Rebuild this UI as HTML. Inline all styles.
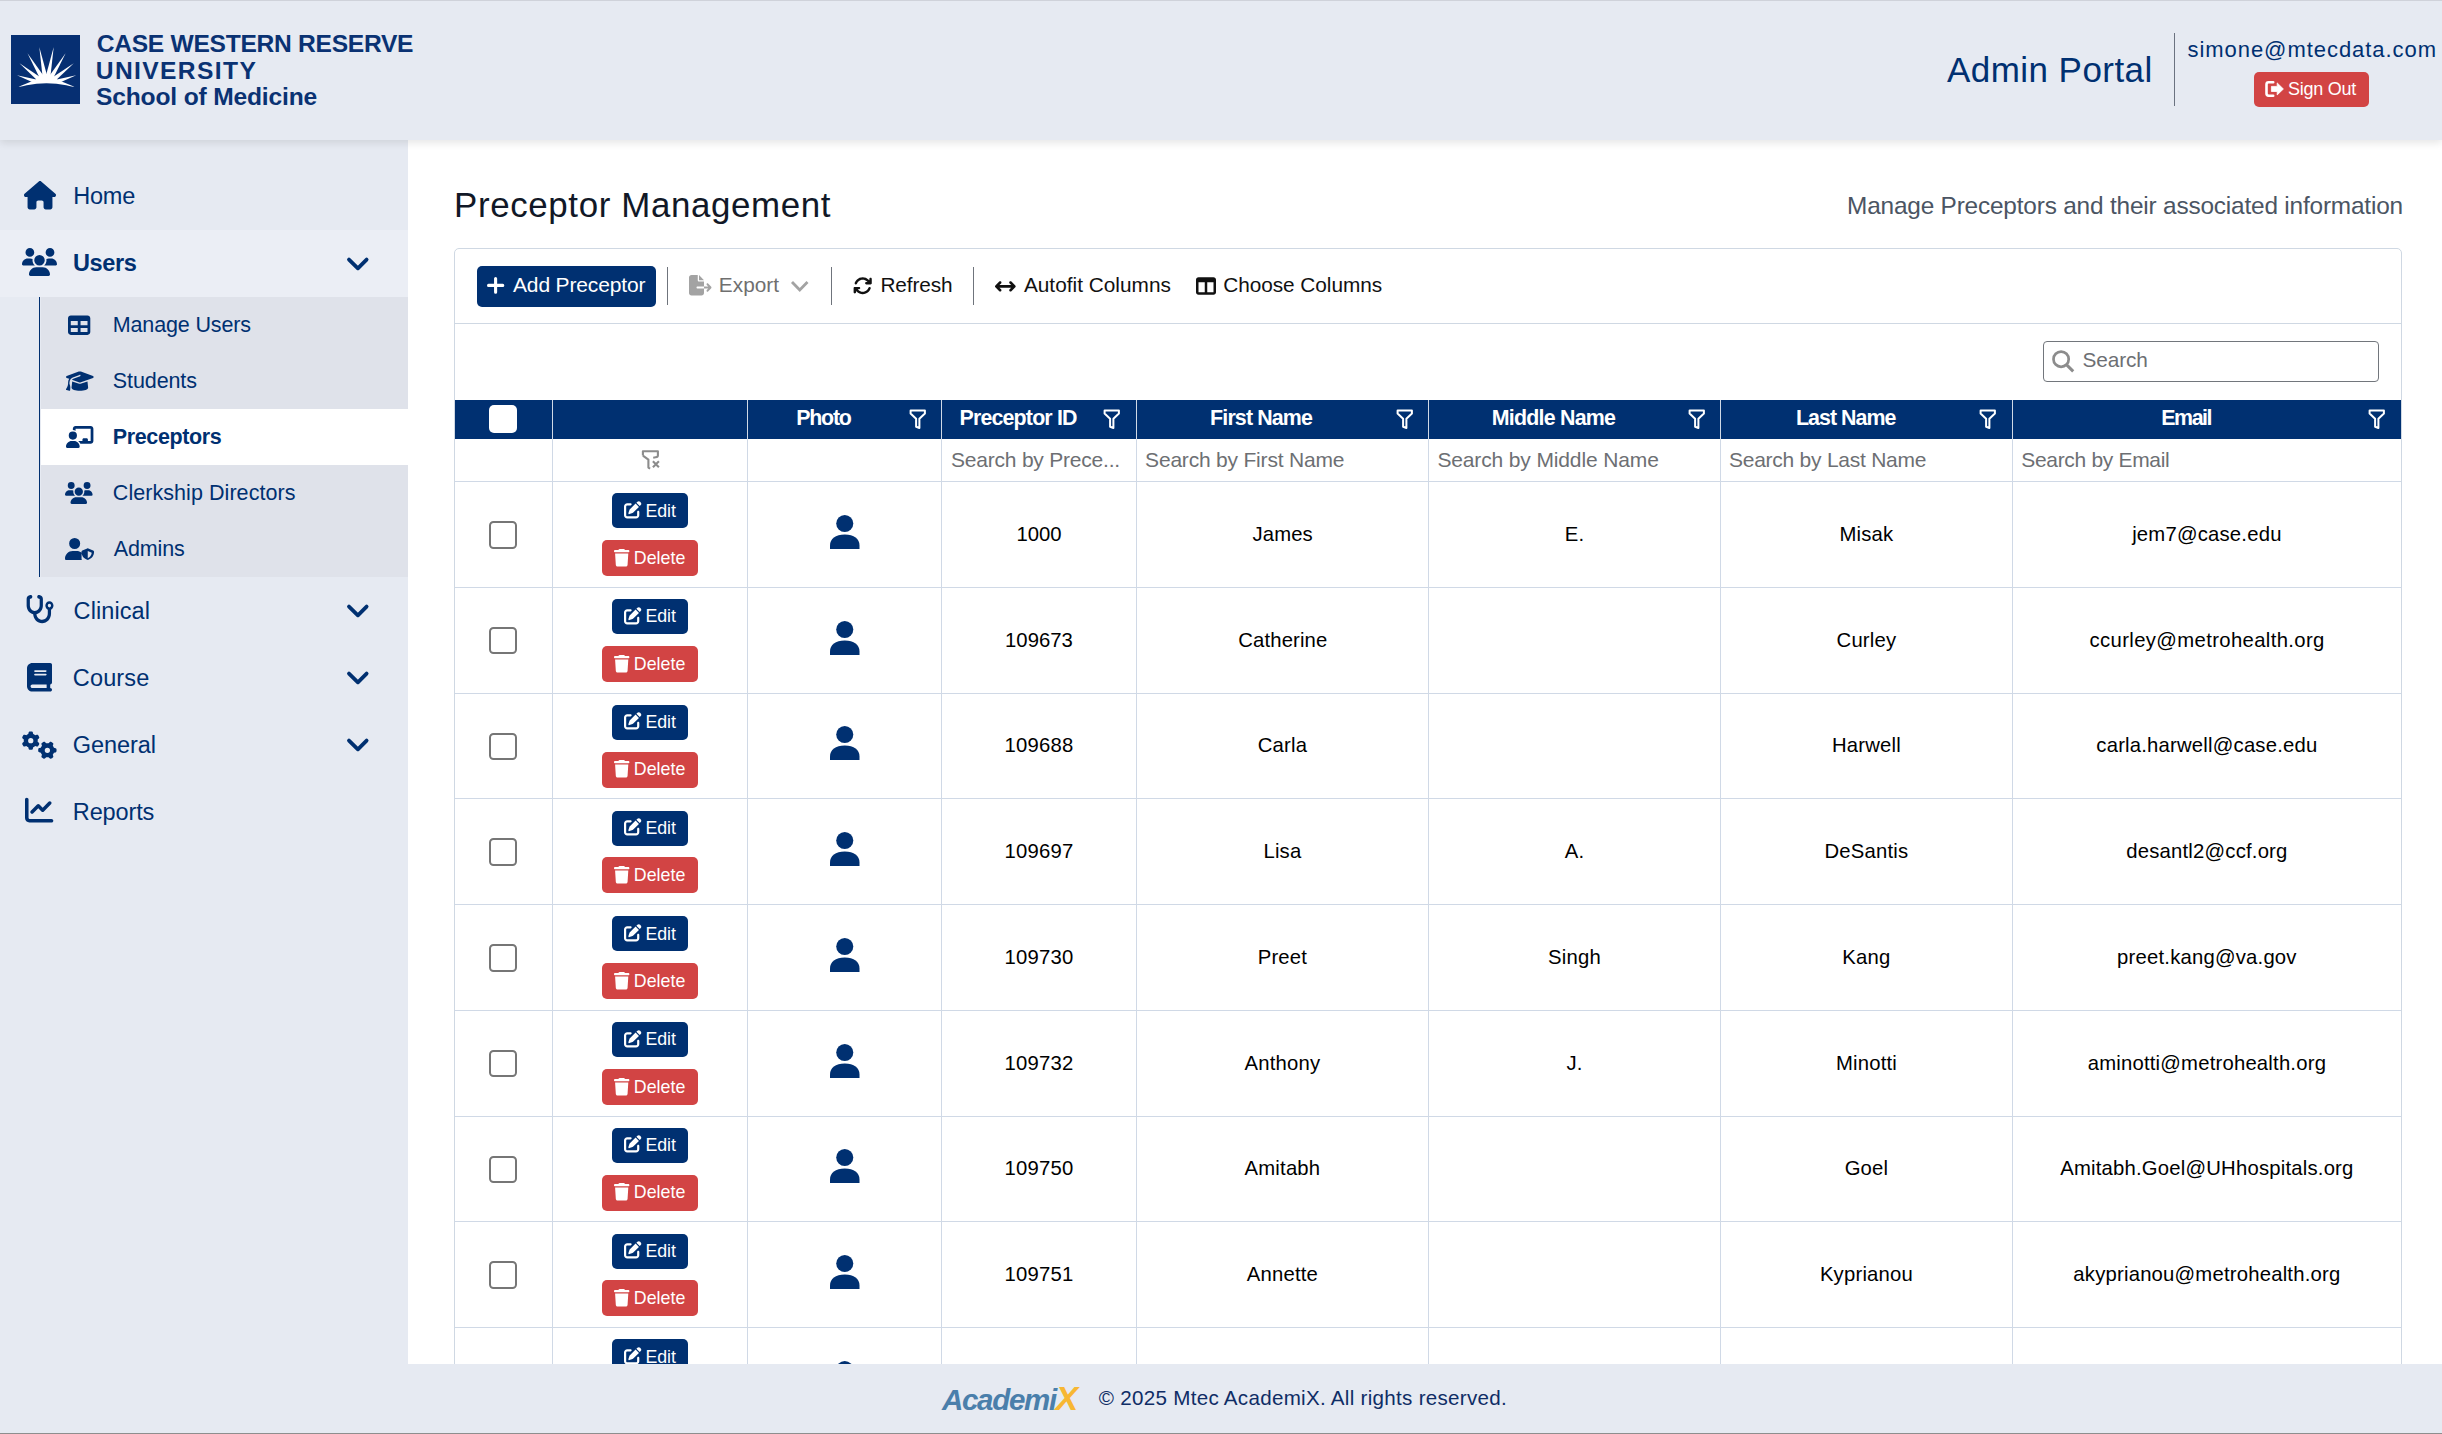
<!DOCTYPE html>
<html><head><meta charset="utf-8"><title>Preceptor Management</title>
<style>
html,body{margin:0;padding:0;}
body{width:2442px;height:1434px;position:relative;overflow:hidden;background:#fff;font-family:"Liberation Sans",sans-serif;}
.t{position:absolute;white-space:nowrap;}
.r{position:absolute;}
.i{position:absolute;overflow:visible;}
</style></head><body>
<div class="r" style="left:0px;top:0px;width:2442px;height:140px;background:#e6eaf2;box-shadow:0 3px 8px rgba(0,0,0,0.10);z-index:5;border-top:1px solid #cfd2da;box-sizing:border-box;"></div>
<div style="position:absolute;left:0;top:0;width:2442px;height:140px;z-index:6;">
<svg class="i" style="left:11.00px;top:35.00px;overflow:hidden;" width="69.00" height="69.00" viewBox="0 0 69 69" preserveAspectRatio="none"><rect width="69" height="69" fill="#062f72"/><polygon points="6,40.2 27.48,44.91 26.03,49.28" fill="#fff"/><polygon points="8.5,28.3 29.75,42.43 26.88,46.02" fill="#fff"/><polygon points="16.5,18.3 32.73,40.91 28.79,43.28" fill="#fff"/><polygon points="28.3,12.1 36.04,40.52 31.52,41.37" fill="#fff"/><polygon points="42.7,12.1 39.48,41.37 34.96,40.52" fill="#fff"/><polygon points="54.6,18.3 42.23,43.29 38.29,40.92" fill="#fff"/><polygon points="62.8,28.3 44.15,46.06 41.29,42.47" fill="#fff"/><polygon points="65.2,40.2 44.97,49.29 43.53,44.93" fill="#fff"/><ellipse cx="35.5" cy="50" rx="12" ry="11" fill="#fff"/><polygon points="7.6,51.8 27,43.8 31,52" fill="#fff"/><polygon points="63.4,51.8 44,43.8 40,52" fill="#fff"/><circle cx="35.5" cy="149.6" r="101.4" fill="#062f72"/></svg>
<div class="t" style="left:96.80px;top:32px;font-size:24.6px;line-height:24.6px;color:#0a3273;font-weight:700;letter-spacing:-0.284px;">CASE WESTERN RESERVE</div>
<div class="t" style="left:95.80px;top:59px;font-size:24.6px;line-height:24.6px;color:#0a3273;font-weight:700;letter-spacing:1.380px;">UNIVERSITY</div>
<div class="t" style="left:96.00px;top:85px;font-size:24.6px;line-height:24.6px;color:#0a3273;font-weight:700;letter-spacing:-0.168px;">School of Medicine</div>
<div class="t" style="left:1947.00px;top:52px;font-size:35px;line-height:35px;color:#003071;font-weight:400;letter-spacing:0.445px;">Admin Portal</div>
<div class="r" style="left:2174px;top:33px;width:1px;height:73px;background:#6b7280;"></div>
<div class="t" style="left:2187.50px;top:39px;font-size:22px;line-height:22px;color:#003071;font-weight:400;letter-spacing:0.950px;">simone@mtecdata.com</div>
<div class="r" style="left:2254px;top:72px;width:115px;height:35px;background:#d24444;border-radius:5px;"></div>
<svg class="i" style="left:2262.00px;top:78.00px;" width="24.00" height="20.00" viewBox="0 0 24 20" preserveAspectRatio="none"><path d="M11.2 4.3H6.6Q4.5 4.3 4.5 6.4V15.6Q4.5 17.7 6.6 17.7H11.2" stroke="#fff" stroke-width="2.6" fill="none" stroke-linecap="round"/><path d="M9.4 8.4H15.2V4.9L21.4 11L15.2 16.9V13.5H9.4Z" fill="#fff" stroke="#fff" stroke-width="0.8" stroke-linejoin="round"/></svg>
<div class="t" style="left:2288.00px;top:80px;font-size:18px;line-height:18px;color:#fff;font-weight:400;letter-spacing:-0.257px;">Sign Out</div>
</div>
<div class="r" style="left:0px;top:140px;width:408px;height:1224px;background:#e6eaf2;"></div>
<div class="r" style="left:0px;top:230px;width:408px;height:67px;background:#ebeef5;"></div>
<div class="r" style="left:39px;top:297px;width:1px;height:280px;background:#003071;"></div>
<div class="r" style="left:41px;top:297px;width:367px;height:280px;background:#dfe2ea;"></div>
<div class="r" style="left:41px;top:409px;width:367px;height:56px;background:#ffffff;"></div>
<svg class="i" style="left:24.00px;top:181.30px;" width="32.00" height="28.40" viewBox="0 0 576 512" preserveAspectRatio="none"><path fill="#003071" d="M575.8 255.5c0 18-15 32.1-32 32.1h-32l.7 160.2c0 2.7-.2 5.4-.5 8.1V472c0 22.1-17.9 40-40 40H456c-1.1 0-2.2 0-3.3-.1c-1.4 .1-2.8 .1-4.2 .1H416 392c-22.1 0-40-17.9-40-40V448 384c0-17.7-14.3-32-32-32H256c-17.7 0-32 14.3-32 32v64 24c0 22.1-17.9 40-40 40H160 128.1c-1.5 0-3-.1-4.5-.2c-1.2 .1-2.4 .2-3.6 .2H104c-22.1 0-40-17.9-40-40V360c0-.9 0-1.9 .1-2.8V287.6H32c-18 0-32-14-32-32.1c0-9 3-17 10-24L266.4 8c7-7 15-8 22-8s15 2 21 7L564.8 231.5c8 7 12 15 11 24z"/></svg>
<div class="t" style="left:73.20px;top:185px;font-size:23.5px;line-height:23.5px;color:#003071;font-weight:400;letter-spacing:-0.180px;">Home</div>
<svg class="i" style="left:22.00px;top:248.40px;" width="35.00" height="28.00" viewBox="0 0 640 512" preserveAspectRatio="none"><path fill="#003071" d="M144 0a80 80 0 1 1 0 160A80 80 0 1 1 144 0zM512 0a80 80 0 1 1 0 160A80 80 0 1 1 512 0zM0 298.7C0 239.8 47.8 192 106.7 192h42.7c15.9 0 31 3.5 44.6 9.7c-1.3 7.2-1.9 14.7-1.9 22.3c0 38.2 16.8 72.5 43.3 96c-.2 0-.4 0-.7 0H21.3C9.6 320 0 310.4 0 298.7zM405.3 320c-.2 0-.4 0-.7 0c26.6-23.5 43.3-57.8 43.3-96c0-7.6-.7-15-1.9-22.3c13.6-6.3 28.7-9.7 44.6-9.7h42.7C592.2 192 640 239.8 640 298.7c0 11.8-9.6 21.3-21.3 21.3H405.3zM224 224a96 96 0 1 1 192 0 96 96 0 1 1 -192 0zM128 485.3C128 411.7 187.7 352 261.3 352H378.7C452.3 352 512 411.7 512 485.3c0 14.7-11.9 26.7-26.7 26.7H154.7c-14.7 0-26.7-11.9-26.7-26.7z"/></svg>
<div class="t" style="left:73.00px;top:252px;font-size:23.5px;line-height:23.5px;color:#003071;font-weight:700;letter-spacing:-0.360px;">Users</div>
<svg class="i" style="left:346.00px;top:257.10px;" width="24.00" height="15.00" viewBox="0 0 24 15" preserveAspectRatio="none"><path d="M3 2.6L11.9 11.3L20.6 2.6" stroke="#003071" stroke-width="3.8" fill="none" stroke-linecap="round" stroke-linejoin="round"/></svg>
<svg class="i" style="left:68.30px;top:313.60px;" width="22.30" height="22.30" viewBox="0 0 512 512" preserveAspectRatio="none"><path fill="#003071" d="M64 256V160H224v96H64zm0 64H224v96H64V320zm224 96V320H448v96H288zM448 256H288V160H448v96zM64 32C28.7 32 0 60.7 0 96V416c0 35.3 28.7 64 64 64H448c35.3 0 64-28.7 64-64V96c0-35.3-28.7-64-64-64H64z"/></svg>
<div class="t" style="left:112.80px;top:315px;font-size:21.5px;line-height:21.5px;color:#003071;font-weight:400;letter-spacing:-0.149px;">Manage Users</div>
<svg class="i" style="left:65.50px;top:369.60px;" width="27.70" height="22.20" viewBox="0 0 640 512" preserveAspectRatio="none"><path fill="#003071" d="M320 32c-8.1 0-16.1 1.4-23.7 4.1L15.8 137.4C6.3 140.9 0 149.9 0 160s6.3 19.1 15.8 22.6l57.9 20.9C57.3 229.3 48 259.8 48 291.9v28.1c0 28.4-10.8 57.7-22.3 80.8c-6.5 13-13.9 25.8-22.5 37.6C0 442.7-.9 448.3 .9 453.4s6 8.9 11.2 10.2l64 16c4.2 1.1 8.7 .3 12.4-2s6.3-6.1 7.1-10.4c8.6-42.8 4.3-81.2-2.1-108.7C90.3 344.3 86 329.8 80 316.5V291.9c0-30.2 10.2-58.7 27.9-81.5c12.9-15.5 29.6-28 49.2-35.7l157-61.7c8.2-3.2 17.5 .8 20.7 9s-.8 17.5-9 20.7l-157 61.7c-12.4 4.9-23.3 12.4-32.2 21.6l159.6 57.6c7.6 2.7 15.6 4.1 23.7 4.1s16.1-1.4 23.7-4.1L624.2 182.6c9.5-3.4 15.8-12.5 15.8-22.6s-6.3-19.1-15.8-22.6L343.7 36.1C336.1 33.4 328.1 32 320 32zM128 408c0 35.3 86 72 192 72s192-36.7 192-72L496.7 262.6 354.5 314c-11.1 4-22.8 6-34.5 6s-23.5-2-34.5-6L143.3 262.6 128 408z"/></svg>
<div class="t" style="left:112.80px;top:371px;font-size:21.5px;line-height:21.5px;color:#003071;font-weight:400;letter-spacing:-0.100px;">Students</div>
<svg class="i" style="left:65.80px;top:425.80px;" width="27.40" height="21.90" viewBox="0 0 640 512" preserveAspectRatio="none"><path fill="#003071" d="M160 64c0-35.3 28.7-64 64-64H576c35.3 0 64 28.7 64 64V352c0 35.3-28.7 64-64 64H336.8c-11.8-25.5-29.9-47.5-52.4-64H384V320c0-17.7 14.3-32 32-32h64c17.7 0 32 14.3 32 32v32h64V64L224 64v49.1C205.2 102.2 183.3 96 160 96V64zm0 64a96 96 0 1 1 0 192 96 96 0 1 1 0-192zM133.3 352h53.3C260.3 352 320 411.7 320 485.3c0 14.7-11.9 26.7-26.7 26.7H26.7C11.9 512 0 500.1 0 485.3C0 411.7 59.7 352 133.3 352z"/></svg>
<div class="t" style="left:112.80px;top:427px;font-size:21.5px;line-height:21.5px;color:#003071;font-weight:700;letter-spacing:-0.380px;">Preceptors</div>
<svg class="i" style="left:65.40px;top:482.00px;" width="27.60" height="22.00" viewBox="0 0 640 512" preserveAspectRatio="none"><path fill="#003071" d="M144 0a80 80 0 1 1 0 160A80 80 0 1 1 144 0zM512 0a80 80 0 1 1 0 160A80 80 0 1 1 512 0zM0 298.7C0 239.8 47.8 192 106.7 192h42.7c15.9 0 31 3.5 44.6 9.7c-1.3 7.2-1.9 14.7-1.9 22.3c0 38.2 16.8 72.5 43.3 96c-.2 0-.4 0-.7 0H21.3C9.6 320 0 310.4 0 298.7zM405.3 320c-.2 0-.4 0-.7 0c26.6-23.5 43.3-57.8 43.3-96c0-7.6-.7-15-1.9-22.3c13.6-6.3 28.7-9.7 44.6-9.7h42.7C592.2 192 640 239.8 640 298.7c0 11.8-9.6 21.3-21.3 21.3H405.3zM224 224a96 96 0 1 1 192 0 96 96 0 1 1 -192 0zM128 485.3C128 411.7 187.7 352 261.3 352H378.7C452.3 352 512 411.7 512 485.3c0 14.7-11.9 26.7-26.7 26.7H154.7c-14.7 0-26.7-11.9-26.7-26.7z"/></svg>
<div class="t" style="left:112.80px;top:483px;font-size:21.5px;line-height:21.5px;color:#003071;font-weight:400;letter-spacing:0.060px;">Clerkship Directors</div>
<svg class="i" style="left:65.40px;top:538.00px;" width="27.60" height="22.00" viewBox="0 0 640 512" preserveAspectRatio="none"><path fill="#003071" d="M224 256A128 128 0 1 0 224 0a128 128 0 1 0 0 256zm-45.7 48C79.8 304 0 383.8 0 482.3C0 498.7 13.3 512 29.7 512H392.6c-5.4-9.4-8.6-20.3-8.6-32V352c0-2.1 .1-4.2 .3-6.3c-31-26-71-41.7-114.6-41.7H178.3zM528 240c-4.5 0-8.9 .9-13 2.8L402.6 290.4c-11.9 5-20.6 16.7-20.6 30.3c0 78.2 38.1 147.7 129.6 185.9c10.6 4.4 22.1 4.4 32.7 0C635.9 468.4 674 398.9 674 320.7c0-13.6-8.7-25.3-20.6-30.3L541 242.8c-4.1-1.9-8.5-2.8-13-2.8zm0 64.4L620.5 344C613 404 583 446 528 472.8V304.4z"/></svg>
<div class="t" style="left:113.80px;top:539px;font-size:21.5px;line-height:21.5px;color:#003071;font-weight:400;letter-spacing:-0.144px;">Admins</div>
<svg class="i" style="left:25.30px;top:595.30px;" width="29.30" height="28.30" viewBox="0 0 576 512" preserveAspectRatio="none"><path fill="#003071" d="M142.4 21.9c5.6 16.8-3.5 34.9-20.2 40.5L96 71.1V192c0 53 43 96 96 96s96-43 96-96V71.1l-26.1-8.7c-16.8-5.6-25.8-23.7-20.2-40.5s23.7-25.8 40.5-20.2l26.1 8.7C334.4 19.1 352 43.5 352 71.1V192c0 77.2-54.6 141.6-127.3 156.7C231 404.6 278.4 448 336 448c61.9 0 112-50.1 112-112V265.3c-28.3-12.3-48-40.5-48-73.3c0-44.2 35.8-80 80-80s80 35.8 80 80c0 32.8-19.7 61-48 73.3V336c0 97.2-78.8 176-176 176c-92.9 0-168.9-71.9-175.5-163.1C87.2 334.2 32 269.6 32 192V71.1c0-27.5 17.6-52 43.8-60.7l26.1-8.7c16.8-5.6 34.9 3.5 40.5 20.2zM480 224a32 32 0 1 0 0-64 32 32 0 1 0 0 64z"/></svg>
<div class="t" style="left:73.60px;top:600px;font-size:23.5px;line-height:23.5px;color:#003071;font-weight:400;letter-spacing:0.080px;">Clinical</div>
<svg class="i" style="left:346.00px;top:604.10px;" width="24.00" height="15.00" viewBox="0 0 24 15" preserveAspectRatio="none"><path d="M3 2.6L11.9 11.3L20.6 2.6" stroke="#003071" stroke-width="3.8" fill="none" stroke-linecap="round" stroke-linejoin="round"/></svg>
<svg class="i" style="left:27.30px;top:663.40px;" width="25.00" height="28.50" viewBox="0 0 448 512" preserveAspectRatio="none"><path fill="#003071" d="M96 0C43 0 0 43 0 96V416c0 53 43 96 96 96H384h32c17.7 0 32-14.3 32-32s-14.3-32-32-32V384c17.7 0 32-14.3 32-32V32c0-17.7-14.3-32-32-32H384 96zm0 384H352v64H96c-17.7 0-32-14.3-32-32s14.3-32 32-32zm32-240c0-8.8 7.2-16 16-16H336c8.8 0 16 7.2 16 16s-7.2 16-16 16H144c-8.8 0-16-7.2-16-16zm16 48H336c8.8 0 16 7.2 16 16s-7.2 16-16 16H144c-8.8 0-16-7.2-16-16s7.2-16 16-16z"/></svg>
<div class="t" style="left:72.80px;top:667px;font-size:23.5px;line-height:23.5px;color:#003071;font-weight:400;letter-spacing:0.144px;">Course</div>
<svg class="i" style="left:346.00px;top:671.10px;" width="24.00" height="15.00" viewBox="0 0 24 15" preserveAspectRatio="none"><path d="M3 2.6L11.9 11.3L20.6 2.6" stroke="#003071" stroke-width="3.8" fill="none" stroke-linecap="round" stroke-linejoin="round"/></svg>
<svg class="i" style="left:21.80px;top:730.50px;" width="35.00" height="28.00" viewBox="0 0 640 512" preserveAspectRatio="none"><path fill="#003071" d="M308.5 135.3c7.1-6.3 9.9-16.2 6.2-25c-2.3-5.3-4.8-10.5-7.6-15.5L304 89.4c-3-5-6.3-9.9-9.8-14.6c-5.7-7.6-15.7-10.1-24.7-7.1l-28.2 9.3c-10.7-8.8-23-16-36.2-20.9L199 27.1c-1.9-9.3-9.1-16.7-18.5-17.8C173.9 8.4 167.2 8 160.4 8h-.7c-6.8 0-13.5 .4-20.1 1.2c-9.4 1.1-16.6 8.6-18.5 17.8L115 56.1c-13.3 5-25.5 12.1-36.2 20.9L50.5 67.8c-9-3-19-.5-24.7 7.1c-3.5 4.7-6.8 9.6-9.9 14.6l-3 5.3c-2.8 5-5.3 10.2-7.6 15.6c-3.7 8.7-.9 18.6 6.2 25l22.2 19.8C32.6 161.9 32 168.9 32 176s.6 14.1 1.7 20.9L11.5 216.7c-7.1 6.3-9.900 16.2-6.2 25c2.3 5.3 4.8 10.5 7.6 15.6l3 5.2c3 5.1 6.3 9.9 9.9 14.6c5.7 7.6 15.7 10.1 24.7 7.1l28.2-9.3c10.7 8.8 23 16 36.2 20.9l6.1 29.1c1.9 9.3 9.1 16.7 18.5 17.8c6.7 .8 13.5 1.2 20.4 1.2s13.7-.4 20.4-1.2c9.4-1.1 16.6-8.6 18.5-17.8l6.1-29.1c13.3-5 25.5-12.1 36.2-20.9l28.2 9.3c9 3 19 .5 24.7-7.1c3.5-4.7 6.8-9.5 9.800-14.6l3.1-5.4c2.8-5 5.3-10.2 7.6-15.5c3.7-8.7 .9-18.6-6.2-25l-22.2-19.8c1.1-6.8 1.7-13.8 1.7-20.9s-.6-14.1-1.7-20.9l22.2-19.8zM112 176a48 48 0 1 1 96 0 48 48 0 1 1 -96 0zM504.7 500.5c6.3 7.1 16.2 9.9 25 6.2c5.3-2.3 10.5-4.8 15.5-7.6l5.4-3.1c5-3 9.8-6.3 14.5-9.8c7.6-5.7 10.1-15.7 7.1-24.7l-9.3-28.2c8.8-10.7 16-23 20.9-36.2l29.1-6.1c9.3-1.9 16.7-9.1 17.8-18.5c.8-6.7 1.2-13.5 1.2-20.4s-.4-13.7-1.2-20.4c-1.1-9.4-8.6-16.6-17.8-18.5L583.9 307c-5-13.3-12.1-25.5-20.9-36.2l9.3-28.2c3-9 .5-19-7.1-24.7c-4.7-3.5-9.6-6.8-14.6-9.9l-5.3-3c-5-2.8-10.2-5.3-15.6-7.6c-8.7-3.7-18.6-.9-25 6.2l-19.8 22.2c-6.8-1.1-13.8-1.7-20.9-1.7s-14.1 .6-20.9 1.7l-19.8-22.2c-6.3-7.1-16.2-9.9-25-6.2c-5.3 2.3-10.5 4.8-15.6 7.600l-5.2 3c-5.1 3-9.900 6.3-14.6 9.9c-7.6 5.7-10.1 15.7-7.1 24.7l9.3 28.2c-8.8 10.7-16 23-20.9 36.2L315.1 313c-9.3 1.9-16.7 9.1-17.8 18.5c-.8 6.7-1.2 13.5-1.2 20.4s.4 13.7 1.2 20.4c1.1 9.4 8.6 16.6 17.8 18.5l29.1 6.1c5 13.3 12.1 25.5 20.9 36.2l-9.3 28.2c-3 9-.5 19 7.1 24.7c4.7 3.5 9.5 6.8 14.6 9.8l5.4 3.1c5 2.8 10.2 5.3 15.5 7.6c8.7 3.7 18.6 .9 25-6.2l19.8-22.2c6.8 1.1 13.8 1.7 20.9 1.7s14.1-.6 20.9-1.7l19.8 22.2zM464 304a48 48 0 1 1 0 96 48 48 0 1 1 0-96z"/></svg>
<div class="t" style="left:72.80px;top:734px;font-size:23.5px;line-height:23.5px;color:#003071;font-weight:400;letter-spacing:-0.090px;">General</div>
<svg class="i" style="left:346.00px;top:738.10px;" width="24.00" height="15.00" viewBox="0 0 24 15" preserveAspectRatio="none"><path d="M3 2.6L11.9 11.3L20.6 2.6" stroke="#003071" stroke-width="3.8" fill="none" stroke-linecap="round" stroke-linejoin="round"/></svg>
<svg class="i" style="left:25.30px;top:795.50px;" width="28.30" height="28.30" viewBox="0 0 512 512" preserveAspectRatio="none"><path fill="#003071" d="M64 64c0-17.7-14.3-32-32-32S0 46.3 0 64V400c0 44.2 35.8 80 80 80H480c17.7 0 32-14.3 32-32s-14.3-32-32-32H80c-8.8 0-16-7.2-16-16V64zm406.6 86.6c12.5-12.5 12.5-32.8 0-45.3s-32.8-12.5-45.3 0L320 210.7l-57.4-57.4c-12.5-12.5-32.8-12.5-45.3 0l-112 112c-12.5 12.5-12.5 32.8 0 45.3s32.8 12.5 45.3 0L240 221.3l57.4 57.4c12.5 12.5 32.8 12.5 45.3 0l128-128z"/></svg>
<div class="t" style="left:72.80px;top:801px;font-size:23.5px;line-height:23.5px;color:#003071;font-weight:400;letter-spacing:-0.120px;">Reports</div>
<div class="r" style="left:408px;top:140px;width:2034px;height:1224px;background:#ffffff;"></div>
<div class="t" style="left:454.00px;top:188px;font-size:34.9px;line-height:34.9px;color:#111827;font-weight:400;letter-spacing:0.627px;">Preceptor Management</div>
<div class="t" style="left:1847.00px;top:194px;font-size:24.4px;line-height:24.4px;color:#4b5563;font-weight:400;letter-spacing:-0.189px;">Manage Preceptors and their associated information</div>
<div class="r" style="left:454px;top:248px;width:1948px;height:1200px;border:1px solid #cfd8e3;border-radius:5px;box-sizing:border-box;"></div>
<div class="r" style="left:455px;top:323px;width:1946px;height:1px;background:#cfd8e3;"></div>
<div class="r" style="left:477px;top:266px;width:179px;height:41px;background:#003071;border-radius:5px;"></div>
<svg class="i" style="left:486.80px;top:277.10px;" width="17.30" height="16.80" viewBox="0 0 17.3 16.8" preserveAspectRatio="none"><path d="M8.6 1.55V15.25M1.55 8.4H15.75" stroke="#fff" stroke-width="3.1" stroke-linecap="round"/></svg>
<div class="t" style="left:513.00px;top:274px;font-size:21px;line-height:21px;color:#fff;font-weight:400;letter-spacing:-0.150px;">Add Preceptor</div>
<div class="r" style="left:667px;top:267px;width:1px;height:38px;background:#6f747c;"></div>
<svg class="i" style="left:688.50px;top:275.00px;" width="22.50" height="20.50" viewBox="0 0 576 512" preserveAspectRatio="none"><path fill="#a3a3a3" d="M0 64C0 28.7 28.7 0 64 0H224V128c0 17.7 14.3 32 32 32H384V288H216c-13.3 0-24 10.7-24 24s10.7 24 24 24H384V448c0 35.3-28.7 64-64 64H64c-35.3 0-64-28.7-64-64V64zM384 336V288H494.1l-39-39c-9.4-9.4-9.4-24.6 0-33.9s24.6-9.4 33.9 0l80 80c9.4 9.4 9.4 24.6 0 33.9l-80 80c-9.4 9.4-24.6 9.4-33.9 0s-9.4-24.6 0-33.9l39-39H384zm0-208H256V0L384 128z"/></svg>
<div class="t" style="left:718.80px;top:275px;font-size:20.8px;line-height:20.8px;color:#6f6f6f;font-weight:400;letter-spacing:0.036px;">Export</div>
<svg class="i" style="left:789.50px;top:280.00px;" width="19.50" height="13.00" viewBox="0 0 19.5 13" preserveAspectRatio="none"><path d="M2 2L9.75 10L17.5 2" stroke="#a3a3a3" stroke-width="2.8" fill="none"/></svg>
<div class="r" style="left:831px;top:267px;width:1px;height:38px;background:#6f747c;"></div>
<svg class="i" style="left:853.00px;top:276.20px;" width="19.40" height="19.40" viewBox="0 0 512 512" preserveAspectRatio="none"><path fill="#111" d="M105.1 202.6c7.7-21.8 20.2-42.3 37.8-59.8c62.5-62.5 163.8-62.5 226.3 0L386.3 160H352c-17.7 0-32 14.3-32 32s14.3 32 32 32H463.5c0 0 0 0 0 0h.4c17.7 0 32-14.3 32-32V80c0-17.7-14.3-32-32-32s-32 14.3-32 32v35.2L414.4 97.6c-87.5-87.5-229.3-87.5-316.8 0C73.2 122 55.6 150.7 44.8 181.4c-5.9 16.7 2.9 34.9 19.5 40.8s34.9-2.9 40.8-19.5zM39 289.3c-5 1.5-9.8 4.2-13.7 8.2c-4 4-6.7 8.8-8.1 14c-.3 1.2-.6 2.5-.8 3.8c-.3 1.7-.4 3.4-.4 5.1V432c0 17.7 14.3 32 32 32s32-14.3 32-32V396.9l17.6 17.5 0 0c87.5 87.4 229.3 87.4 316.7 0c24.4-24.4 42.1-53.1 52.9-83.7c5.9-16.7-2.9-34.9-19.5-40.8s-34.9 2.9-40.8 19.5c-7.7 21.8-20.2 42.3-37.8 59.8c-62.5 62.5-163.8 62.5-226.3 0l-.1-.1L125.6 352H160c17.7 0 32-14.3 32-32s-14.3-32-32-32H48.4c-1.6 0-3.2 .1-4.8 .3s-3.1 .5-4.6 1z"/></svg>
<div class="t" style="left:880.40px;top:275px;font-size:20.8px;line-height:20.8px;color:#111;font-weight:400;letter-spacing:-0.090px;">Refresh</div>
<div class="r" style="left:973px;top:267px;width:1px;height:38px;background:#6f747c;"></div>
<svg class="i" style="left:994.60px;top:275.50px;" width="20.70" height="20.70" viewBox="0 0 512 512" preserveAspectRatio="none"><path fill="#111" d="M406.6 374.6l96-96c12.5-12.5 12.5-32.8 0-45.3l-96-96c-12.5-12.5-32.8-12.5-45.3 0s-12.5 32.8 0 45.3L402.7 224l-293.5 0 41.4-41.4c12.5-12.5 12.5-32.8 0-45.3s-32.8-12.5-45.3 0l-96 96c-12.5 12.5-12.5 32.8 0 45.3l96 96c12.5 12.5 32.8 12.5 45.3 0s12.5-32.8 0-45.3L109.3 288l293.5 0-41.4 41.4c-12.5 12.5-12.5 32.8 0 45.3s32.8 12.5 45.3 0z"/></svg>
<div class="t" style="left:1023.90px;top:275px;font-size:20.8px;line-height:20.8px;color:#111;font-weight:400;letter-spacing:0.016px;">Autofit Columns</div>
<svg class="i" style="left:1196.00px;top:275.50px;" width="20.00" height="20.00" viewBox="0 0 512 512" preserveAspectRatio="none"><path fill="#111" d="M0 96C0 60.7 28.7 32 64 32H448c35.3 0 64 28.7 64 64V416c0 35.3-28.7 64-64 64H64c-35.3 0-64-28.7-64-64V96zm64 64V416H224V160H64zm384 0H288V416H448V160z"/></svg>
<div class="t" style="left:1223.20px;top:275px;font-size:20.8px;line-height:20.8px;color:#111;font-weight:400;letter-spacing:-0.045px;">Choose Columns</div>
<div class="r" style="left:2043px;top:341px;width:336px;height:41px;border:1.5px solid #72767c;border-radius:4px;box-sizing:border-box;"></div>
<svg class="i" style="left:2040.00px;top:338.00px;" width="40.00" height="40.00" viewBox="0 0 40 40" preserveAspectRatio="none"><circle cx="21.1" cy="21.2" r="7.6" stroke="#8c8c8c" stroke-width="2.7" fill="none"/><path d="M26.4 26.6L33.2 33.4" stroke="#8c8c8c" stroke-width="3"/></svg>
<div class="t" style="left:2082.50px;top:350px;font-size:20.8px;line-height:20.8px;color:#6d6f73;font-weight:400;letter-spacing:-0.108px;">Search</div>
<div class="r" style="left:455px;top:400px;width:1946px;height:39px;background:#003071;"></div>
<div class="r" style="left:552px;top:400px;width:1px;height:964px;background:#d0d9e6;"></div>
<div class="r" style="left:747px;top:400px;width:1px;height:964px;background:#d0d9e6;"></div>
<div class="r" style="left:941px;top:400px;width:1px;height:964px;background:#d0d9e6;"></div>
<div class="r" style="left:1136px;top:400px;width:1px;height:964px;background:#d0d9e6;"></div>
<div class="r" style="left:1428px;top:400px;width:1px;height:964px;background:#d0d9e6;"></div>
<div class="r" style="left:1720px;top:400px;width:1px;height:964px;background:#d0d9e6;"></div>
<div class="r" style="left:2012px;top:400px;width:1px;height:964px;background:#d0d9e6;"></div>
<div class="r" style="left:489px;top:405px;width:28px;height:28px;background:#fff;border-radius:5px;"></div>
<div class="t" style="left:745.88px;top:408px;font-size:21.4px;line-height:21.4px;color:#fff;font-weight:700;width:155.10px;text-align:center;letter-spacing:-1.207px;">Photo</div>
<svg class="i" style="left:908.50px;top:409.20px;" width="17.50" height="21.00" viewBox="0 0 17.5 21" preserveAspectRatio="none"><path d="M1.6 1.6H15.9V4.6L10.4 9.8V19L7.1 17.8V9.8L1.6 4.6Z" stroke="#fff" stroke-width="2" fill="none" stroke-linejoin="round"/></svg>
<div class="t" style="left:940.16px;top:408px;font-size:21.4px;line-height:21.4px;color:#fff;font-weight:700;width:155.90px;text-align:center;letter-spacing:-0.829px;">Preceptor ID</div>
<svg class="i" style="left:1103.40px;top:409.20px;" width="17.50" height="21.00" viewBox="0 0 17.5 21" preserveAspectRatio="none"><path d="M1.6 1.6H15.9V4.6L10.4 9.8V19L7.1 17.8V9.8L1.6 4.6Z" stroke="#fff" stroke-width="2" fill="none" stroke-linejoin="round"/></svg>
<div class="t" style="left:1134.55px;top:408px;font-size:21.4px;line-height:21.4px;color:#fff;font-weight:700;width:253.10px;text-align:center;letter-spacing:-0.860px;">First Name</div>
<svg class="i" style="left:1395.50px;top:409.20px;" width="17.50" height="21.00" viewBox="0 0 17.5 21" preserveAspectRatio="none"><path d="M1.6 1.6H15.9V4.6L10.4 9.8V19L7.1 17.8V9.8L1.6 4.6Z" stroke="#fff" stroke-width="2" fill="none" stroke-linejoin="round"/></svg>
<div class="t" style="left:1427.01px;top:408px;font-size:21.4px;line-height:21.4px;color:#fff;font-weight:700;width:253.00px;text-align:center;letter-spacing:-0.774px;">Middle Name</div>
<svg class="i" style="left:1687.50px;top:409.20px;" width="17.50" height="21.00" viewBox="0 0 17.5 21" preserveAspectRatio="none"><path d="M1.6 1.6H15.9V4.6L10.4 9.8V19L7.1 17.8V9.8L1.6 4.6Z" stroke="#fff" stroke-width="2" fill="none" stroke-linejoin="round"/></svg>
<div class="t" style="left:1719.32px;top:408px;font-size:21.4px;line-height:21.4px;color:#fff;font-weight:700;width:252.90px;text-align:center;letter-spacing:-0.964px;">Last Name</div>
<svg class="i" style="left:1979.40px;top:409.20px;" width="17.50" height="21.00" viewBox="0 0 17.5 21" preserveAspectRatio="none"><path d="M1.6 1.6H15.9V4.6L10.4 9.8V19L7.1 17.8V9.8L1.6 4.6Z" stroke="#fff" stroke-width="2" fill="none" stroke-linejoin="round"/></svg>
<div class="t" style="left:2011.17px;top:408px;font-size:21.4px;line-height:21.4px;color:#fff;font-weight:700;width:350.00px;text-align:center;letter-spacing:-1.493px;">Email</div>
<svg class="i" style="left:2368.40px;top:409.20px;" width="17.50" height="21.00" viewBox="0 0 17.5 21" preserveAspectRatio="none"><path d="M1.6 1.6H15.9V4.6L10.4 9.8V19L7.1 17.8V9.8L1.6 4.6Z" stroke="#fff" stroke-width="2" fill="none" stroke-linejoin="round"/></svg>
<div class="r" style="left:455px;top:481px;width:1946px;height:1px;background:#d0d9e6;"></div>
<svg class="i" style="left:630.00px;top:440.00px;" width="40.00" height="40.00" viewBox="0 0 40 40" preserveAspectRatio="none"><path d="M12.9 15.6V11.3H27.9V15.4Q27.9 16.9 25.6 17.3L23.2 17.7M12.9 15.6L18.4 19.6V27.6L20.1 28.6" stroke="#8c8c8c" stroke-width="2.1" fill="none" stroke-linejoin="round"/><path d="M22.9 21.3L28.9 27.3M28.9 21.3L22.9 27.3" stroke="#8c8c8c" stroke-width="2.1"/></svg>
<div class="t" style="left:951.00px;top:449px;font-size:21px;line-height:21px;color:#6d6f73;font-weight:400;letter-spacing:-0.211px;">Search by Prece...</div>
<div class="t" style="left:1145.10px;top:449px;font-size:21px;line-height:21px;color:#6d6f73;font-weight:400;letter-spacing:-0.199px;">Search by First Name</div>
<div class="t" style="left:1437.40px;top:449px;font-size:21px;line-height:21px;color:#6d6f73;font-weight:400;letter-spacing:-0.134px;">Search by Middle Name</div>
<div class="t" style="left:1729.00px;top:449px;font-size:21px;line-height:21px;color:#6d6f73;font-weight:400;letter-spacing:-0.250px;">Search by Last Name</div>
<div class="t" style="left:2021.30px;top:449px;font-size:21px;line-height:21px;color:#6d6f73;font-weight:400;letter-spacing:-0.321px;">Search by Email</div>
<div class="r" style="left:489.3px;top:521.20px;width:27.5px;height:27.5px;border:2px solid #767676;border-radius:4.5px;box-sizing:border-box;"></div>
<div class="r" style="left:612px;top:493.30px;width:76px;height:35px;background:#003071;border-radius:5px;"></div>
<svg class="i" style="left:623.70px;top:500.80px;" width="17.50" height="17.50" viewBox="0 0 512 512" preserveAspectRatio="none"><path fill="#fff" d="M471.6 21.7c-21.9-21.9-57.3-21.9-79.2 0L362.3 51.700l97.9 97.9 30.1-30.1c21.9-21.9 21.9-57.3 0-79.2L471.6 21.7zm-299.2 220c-6.1 6.1-10.8 13.6-13.5 21.9l-29.6 88.8c-2.9 8.6-.6 18.1 5.8 24.6s15.9 8.7 24.6 5.8l88.8-29.6c8.2-2.7 15.7-7.4 21.9-13.5L437.7 172.3 339.7 74.3 172.4 241.7zM96 64C43 64 0 107 0 160V416c0 53 43 96 96 96H352c53 0 96-43 96-96V320c0-17.7-14.3-32-32-32s-32 14.3-32 32v96c0 17.7-14.3 32-32 32H96c-17.7 0-32-14.3-32-32V160c0-17.7 14.3-32 32-32h96c17.7 0 32-14.3 32-32s-14.3-32-32-32H96z"/></svg>
<div class="t" style="left:645.40px;top:503px;font-size:17.8px;line-height:17.8px;color:#fff;font-weight:400;letter-spacing:-0.060px;">Edit</div>
<div class="r" style="left:602px;top:540.00px;width:96px;height:36px;background:#d24444;border-radius:5px;"></div>
<svg class="i" style="left:614.00px;top:548.80px;" width="15.40" height="17.60" viewBox="0 0 448 512" preserveAspectRatio="none"><path fill="#fff" d="M135.2 17.7L128 32H32C14.3 32 0 46.3 0 64S14.3 96 32 96H416c17.7 0 32-14.3 32-32s-14.3-32-32-32H320l-7.2-14.3C307.4 6.8 296.3 0 284.2 0H163.8c-12.1 0-23.2 6.8-28.6 17.7zM416 128H32L53.2 467c1.6 25.3 22.6 45 47.9 45H346.9c25.3 0 46.3-19.7 47.9-45L416 128z"/></svg>
<div class="t" style="left:633.80px;top:550px;font-size:17.8px;line-height:17.8px;color:#fff;font-weight:400;letter-spacing:0.036px;">Delete</div>
<svg class="i" style="left:830.00px;top:514.90px;" width="30.00" height="34.00" viewBox="0 0 30 34" preserveAspectRatio="none"><circle cx="14.75" cy="8.55" r="8.55" fill="#003071"/><path d="M0 34V30.5C0 24 5.5 19.6 14.75 19.6S29.5 24 29.5 30.5V34Z" fill="#003071"/></svg>
<div class="t" style="left:941.57px;top:524px;font-size:20.3px;line-height:20.3px;color:#000;font-weight:400;width:194.90px;text-align:center;letter-spacing:-0.060px;">1000</div>
<div class="t" style="left:1136.66px;top:524px;font-size:20.3px;line-height:20.3px;color:#000;font-weight:400;width:292.10px;text-align:center;letter-spacing:0.098px;">James</div>
<div class="t" style="left:1428.50px;top:524px;font-size:20.3px;line-height:20.3px;color:#000;font-weight:400;width:292.00px;text-align:center;letter-spacing:0.200px;">E.</div>
<div class="t" style="left:1720.50px;top:524px;font-size:20.3px;line-height:20.3px;color:#000;font-weight:400;width:291.90px;text-align:center;letter-spacing:0.200px;">Misak</div>
<div class="t" style="left:2012.40px;top:524px;font-size:20.3px;line-height:20.3px;color:#000;font-weight:400;width:389.00px;text-align:center;letter-spacing:0.200px;">jem7@case.edu</div>
<div class="r" style="left:455px;top:587px;width:1946px;height:1px;background:#d0d9e6;"></div>
<div class="r" style="left:489.3px;top:626.95px;width:27.5px;height:27.5px;border:2px solid #767676;border-radius:4.5px;box-sizing:border-box;"></div>
<div class="r" style="left:612px;top:599.05px;width:76px;height:35px;background:#003071;border-radius:5px;"></div>
<svg class="i" style="left:623.70px;top:606.55px;" width="17.50" height="17.50" viewBox="0 0 512 512" preserveAspectRatio="none"><path fill="#fff" d="M471.6 21.7c-21.9-21.9-57.3-21.9-79.2 0L362.3 51.700l97.9 97.9 30.1-30.1c21.9-21.9 21.9-57.3 0-79.2L471.6 21.7zm-299.2 220c-6.1 6.1-10.8 13.6-13.5 21.9l-29.6 88.8c-2.9 8.6-.6 18.1 5.8 24.6s15.9 8.7 24.6 5.8l88.8-29.6c8.2-2.7 15.7-7.4 21.9-13.5L437.7 172.3 339.7 74.3 172.4 241.7zM96 64C43 64 0 107 0 160V416c0 53 43 96 96 96H352c53 0 96-43 96-96V320c0-17.7-14.3-32-32-32s-32 14.3-32 32v96c0 17.7-14.3 32-32 32H96c-17.7 0-32-14.3-32-32V160c0-17.7 14.3-32 32-32h96c17.7 0 32-14.3 32-32s-14.3-32-32-32H96z"/></svg>
<div class="t" style="left:645.40px;top:608px;font-size:17.8px;line-height:17.8px;color:#fff;font-weight:400;letter-spacing:-0.060px;">Edit</div>
<div class="r" style="left:602px;top:645.75px;width:96px;height:36px;background:#d24444;border-radius:5px;"></div>
<svg class="i" style="left:614.00px;top:654.55px;" width="15.40" height="17.60" viewBox="0 0 448 512" preserveAspectRatio="none"><path fill="#fff" d="M135.2 17.7L128 32H32C14.3 32 0 46.3 0 64S14.3 96 32 96H416c17.7 0 32-14.3 32-32s-14.3-32-32-32H320l-7.2-14.3C307.4 6.8 296.3 0 284.2 0H163.8c-12.1 0-23.2 6.8-28.6 17.7zM416 128H32L53.2 467c1.6 25.3 22.6 45 47.9 45H346.9c25.3 0 46.3-19.7 47.9-45L416 128z"/></svg>
<div class="t" style="left:633.80px;top:656px;font-size:17.8px;line-height:17.8px;color:#fff;font-weight:400;letter-spacing:0.036px;">Delete</div>
<svg class="i" style="left:830.00px;top:620.65px;" width="30.00" height="34.00" viewBox="0 0 30 34" preserveAspectRatio="none"><circle cx="14.75" cy="8.55" r="8.55" fill="#003071"/><path d="M0 34V30.5C0 24 5.5 19.6 14.75 19.6S29.5 24 29.5 30.5V34Z" fill="#003071"/></svg>
<div class="t" style="left:941.50px;top:630px;font-size:20.3px;line-height:20.3px;color:#000;font-weight:400;width:194.90px;text-align:center;">109673</div>
<div class="t" style="left:1136.84px;top:630px;font-size:20.3px;line-height:20.3px;color:#000;font-weight:400;width:292.10px;text-align:center;letter-spacing:0.133px;">Catherine</div>
<div class="t" style="left:1428.50px;top:630px;font-size:20.3px;line-height:20.3px;color:#000;font-weight:400;width:292.00px;text-align:center;letter-spacing:0.200px;"></div>
<div class="t" style="left:1720.50px;top:630px;font-size:20.3px;line-height:20.3px;color:#000;font-weight:400;width:291.90px;text-align:center;letter-spacing:0.200px;">Curley</div>
<div class="t" style="left:2012.64px;top:630px;font-size:20.3px;line-height:20.3px;color:#000;font-weight:400;width:389.00px;text-align:center;letter-spacing:0.356px;">ccurley@metrohealth.org</div>
<div class="r" style="left:455px;top:693px;width:1946px;height:1px;background:#d0d9e6;"></div>
<div class="r" style="left:489.3px;top:732.70px;width:27.5px;height:27.5px;border:2px solid #767676;border-radius:4.5px;box-sizing:border-box;"></div>
<div class="r" style="left:612px;top:704.80px;width:76px;height:35px;background:#003071;border-radius:5px;"></div>
<svg class="i" style="left:623.70px;top:712.30px;" width="17.50" height="17.50" viewBox="0 0 512 512" preserveAspectRatio="none"><path fill="#fff" d="M471.6 21.7c-21.9-21.9-57.3-21.9-79.2 0L362.3 51.700l97.9 97.9 30.1-30.1c21.9-21.9 21.9-57.3 0-79.2L471.6 21.7zm-299.2 220c-6.1 6.1-10.8 13.6-13.5 21.9l-29.6 88.8c-2.9 8.6-.6 18.1 5.8 24.6s15.9 8.7 24.6 5.8l88.8-29.6c8.2-2.7 15.7-7.4 21.9-13.5L437.7 172.3 339.7 74.3 172.4 241.7zM96 64C43 64 0 107 0 160V416c0 53 43 96 96 96H352c53 0 96-43 96-96V320c0-17.7-14.3-32-32-32s-32 14.3-32 32v96c0 17.7-14.3 32-32 32H96c-17.7 0-32-14.3-32-32V160c0-17.7 14.3-32 32-32h96c17.7 0 32-14.3 32-32s-14.3-32-32-32H96z"/></svg>
<div class="t" style="left:645.40px;top:714px;font-size:17.8px;line-height:17.8px;color:#fff;font-weight:400;letter-spacing:-0.060px;">Edit</div>
<div class="r" style="left:602px;top:751.50px;width:96px;height:36px;background:#d24444;border-radius:5px;"></div>
<svg class="i" style="left:614.00px;top:760.30px;" width="15.40" height="17.60" viewBox="0 0 448 512" preserveAspectRatio="none"><path fill="#fff" d="M135.2 17.7L128 32H32C14.3 32 0 46.3 0 64S14.3 96 32 96H416c17.7 0 32-14.3 32-32s-14.3-32-32-32H320l-7.2-14.3C307.4 6.8 296.3 0 284.2 0H163.8c-12.1 0-23.2 6.8-28.6 17.7zM416 128H32L53.2 467c1.6 25.3 22.6 45 47.9 45H346.9c25.3 0 46.3-19.7 47.9-45L416 128z"/></svg>
<div class="t" style="left:633.80px;top:761px;font-size:17.8px;line-height:17.8px;color:#fff;font-weight:400;letter-spacing:0.036px;">Delete</div>
<svg class="i" style="left:830.00px;top:726.40px;" width="30.00" height="34.00" viewBox="0 0 30 34" preserveAspectRatio="none"><circle cx="14.75" cy="8.55" r="8.55" fill="#003071"/><path d="M0 34V30.5C0 24 5.5 19.6 14.75 19.6S29.5 24 29.5 30.5V34Z" fill="#003071"/></svg>
<div class="t" style="left:941.50px;top:735px;font-size:20.3px;line-height:20.3px;color:#000;font-weight:400;width:194.90px;text-align:center;letter-spacing:0.200px;">109688</div>
<div class="t" style="left:1136.40px;top:735px;font-size:20.3px;line-height:20.3px;color:#000;font-weight:400;width:292.10px;text-align:center;letter-spacing:0.200px;">Carla</div>
<div class="t" style="left:1428.50px;top:735px;font-size:20.3px;line-height:20.3px;color:#000;font-weight:400;width:292.00px;text-align:center;letter-spacing:0.200px;"></div>
<div class="t" style="left:1720.50px;top:735px;font-size:20.3px;line-height:20.3px;color:#000;font-weight:400;width:291.90px;text-align:center;letter-spacing:0.200px;">Harwell</div>
<div class="t" style="left:2012.40px;top:735px;font-size:20.3px;line-height:20.3px;color:#000;font-weight:400;width:389.00px;text-align:center;letter-spacing:0.200px;">carla.harwell@case.edu</div>
<div class="r" style="left:455px;top:798px;width:1946px;height:1px;background:#d0d9e6;"></div>
<div class="r" style="left:489.3px;top:838.45px;width:27.5px;height:27.5px;border:2px solid #767676;border-radius:4.5px;box-sizing:border-box;"></div>
<div class="r" style="left:612px;top:810.55px;width:76px;height:35px;background:#003071;border-radius:5px;"></div>
<svg class="i" style="left:623.70px;top:818.05px;" width="17.50" height="17.50" viewBox="0 0 512 512" preserveAspectRatio="none"><path fill="#fff" d="M471.6 21.7c-21.9-21.9-57.3-21.9-79.2 0L362.3 51.700l97.9 97.9 30.1-30.1c21.9-21.9 21.9-57.3 0-79.2L471.6 21.7zm-299.2 220c-6.1 6.1-10.8 13.6-13.5 21.9l-29.6 88.8c-2.9 8.6-.6 18.1 5.8 24.6s15.9 8.7 24.6 5.8l88.8-29.6c8.2-2.7 15.7-7.4 21.9-13.5L437.7 172.3 339.7 74.3 172.4 241.7zM96 64C43 64 0 107 0 160V416c0 53 43 96 96 96H352c53 0 96-43 96-96V320c0-17.7-14.3-32-32-32s-32 14.3-32 32v96c0 17.7-14.3 32-32 32H96c-17.7 0-32-14.3-32-32V160c0-17.7 14.3-32 32-32h96c17.7 0 32-14.3 32-32s-14.3-32-32-32H96z"/></svg>
<div class="t" style="left:645.40px;top:820px;font-size:17.8px;line-height:17.8px;color:#fff;font-weight:400;letter-spacing:-0.060px;">Edit</div>
<div class="r" style="left:602px;top:857.25px;width:96px;height:36px;background:#d24444;border-radius:5px;"></div>
<svg class="i" style="left:614.00px;top:866.05px;" width="15.40" height="17.60" viewBox="0 0 448 512" preserveAspectRatio="none"><path fill="#fff" d="M135.2 17.7L128 32H32C14.3 32 0 46.3 0 64S14.3 96 32 96H416c17.7 0 32-14.3 32-32s-14.3-32-32-32H320l-7.2-14.3C307.4 6.8 296.3 0 284.2 0H163.8c-12.1 0-23.2 6.8-28.6 17.7zM416 128H32L53.2 467c1.6 25.3 22.6 45 47.9 45H346.9c25.3 0 46.3-19.7 47.9-45L416 128z"/></svg>
<div class="t" style="left:633.80px;top:867px;font-size:17.8px;line-height:17.8px;color:#fff;font-weight:400;letter-spacing:0.036px;">Delete</div>
<svg class="i" style="left:830.00px;top:832.15px;" width="30.00" height="34.00" viewBox="0 0 30 34" preserveAspectRatio="none"><circle cx="14.75" cy="8.55" r="8.55" fill="#003071"/><path d="M0 34V30.5C0 24 5.5 19.6 14.75 19.6S29.5 24 29.5 30.5V34Z" fill="#003071"/></svg>
<div class="t" style="left:941.50px;top:841px;font-size:20.3px;line-height:20.3px;color:#000;font-weight:400;width:194.90px;text-align:center;letter-spacing:0.200px;">109697</div>
<div class="t" style="left:1136.40px;top:841px;font-size:20.3px;line-height:20.3px;color:#000;font-weight:400;width:292.10px;text-align:center;letter-spacing:0.200px;">Lisa</div>
<div class="t" style="left:1428.50px;top:841px;font-size:20.3px;line-height:20.3px;color:#000;font-weight:400;width:292.00px;text-align:center;letter-spacing:0.200px;">A.</div>
<div class="t" style="left:1720.50px;top:841px;font-size:20.3px;line-height:20.3px;color:#000;font-weight:400;width:291.90px;text-align:center;letter-spacing:0.200px;">DeSantis</div>
<div class="t" style="left:2012.40px;top:841px;font-size:20.3px;line-height:20.3px;color:#000;font-weight:400;width:389.00px;text-align:center;letter-spacing:0.200px;">desantl2@ccf.org</div>
<div class="r" style="left:455px;top:904px;width:1946px;height:1px;background:#d0d9e6;"></div>
<div class="r" style="left:489.3px;top:944.20px;width:27.5px;height:27.5px;border:2px solid #767676;border-radius:4.5px;box-sizing:border-box;"></div>
<div class="r" style="left:612px;top:916.30px;width:76px;height:35px;background:#003071;border-radius:5px;"></div>
<svg class="i" style="left:623.70px;top:923.80px;" width="17.50" height="17.50" viewBox="0 0 512 512" preserveAspectRatio="none"><path fill="#fff" d="M471.6 21.7c-21.9-21.9-57.3-21.9-79.2 0L362.3 51.700l97.9 97.9 30.1-30.1c21.9-21.9 21.9-57.3 0-79.2L471.6 21.7zm-299.2 220c-6.1 6.1-10.8 13.6-13.5 21.9l-29.6 88.8c-2.9 8.6-.6 18.1 5.8 24.6s15.9 8.7 24.6 5.8l88.8-29.6c8.2-2.7 15.7-7.4 21.9-13.5L437.7 172.3 339.7 74.3 172.4 241.7zM96 64C43 64 0 107 0 160V416c0 53 43 96 96 96H352c53 0 96-43 96-96V320c0-17.7-14.3-32-32-32s-32 14.3-32 32v96c0 17.7-14.3 32-32 32H96c-17.7 0-32-14.3-32-32V160c0-17.7 14.3-32 32-32h96c17.7 0 32-14.3 32-32s-14.3-32-32-32H96z"/></svg>
<div class="t" style="left:645.40px;top:926px;font-size:17.8px;line-height:17.8px;color:#fff;font-weight:400;letter-spacing:-0.060px;">Edit</div>
<div class="r" style="left:602px;top:963.00px;width:96px;height:36px;background:#d24444;border-radius:5px;"></div>
<svg class="i" style="left:614.00px;top:971.80px;" width="15.40" height="17.60" viewBox="0 0 448 512" preserveAspectRatio="none"><path fill="#fff" d="M135.2 17.7L128 32H32C14.3 32 0 46.3 0 64S14.3 96 32 96H416c17.7 0 32-14.3 32-32s-14.3-32-32-32H320l-7.2-14.3C307.4 6.8 296.3 0 284.2 0H163.8c-12.1 0-23.2 6.8-28.6 17.7zM416 128H32L53.2 467c1.6 25.3 22.6 45 47.9 45H346.9c25.3 0 46.3-19.7 47.9-45L416 128z"/></svg>
<div class="t" style="left:633.80px;top:973px;font-size:17.8px;line-height:17.8px;color:#fff;font-weight:400;letter-spacing:0.036px;">Delete</div>
<svg class="i" style="left:830.00px;top:937.90px;" width="30.00" height="34.00" viewBox="0 0 30 34" preserveAspectRatio="none"><circle cx="14.75" cy="8.55" r="8.55" fill="#003071"/><path d="M0 34V30.5C0 24 5.5 19.6 14.75 19.6S29.5 24 29.5 30.5V34Z" fill="#003071"/></svg>
<div class="t" style="left:941.50px;top:947px;font-size:20.3px;line-height:20.3px;color:#000;font-weight:400;width:194.90px;text-align:center;letter-spacing:0.200px;">109730</div>
<div class="t" style="left:1136.40px;top:947px;font-size:20.3px;line-height:20.3px;color:#000;font-weight:400;width:292.10px;text-align:center;letter-spacing:0.200px;">Preet</div>
<div class="t" style="left:1428.50px;top:947px;font-size:20.3px;line-height:20.3px;color:#000;font-weight:400;width:292.00px;text-align:center;letter-spacing:0.200px;">Singh</div>
<div class="t" style="left:1720.50px;top:947px;font-size:20.3px;line-height:20.3px;color:#000;font-weight:400;width:291.90px;text-align:center;letter-spacing:0.200px;">Kang</div>
<div class="t" style="left:2012.40px;top:947px;font-size:20.3px;line-height:20.3px;color:#000;font-weight:400;width:389.00px;text-align:center;letter-spacing:0.200px;">preet.kang@va.gov</div>
<div class="r" style="left:455px;top:1010px;width:1946px;height:1px;background:#d0d9e6;"></div>
<div class="r" style="left:489.3px;top:1049.95px;width:27.5px;height:27.5px;border:2px solid #767676;border-radius:4.5px;box-sizing:border-box;"></div>
<div class="r" style="left:612px;top:1022.05px;width:76px;height:35px;background:#003071;border-radius:5px;"></div>
<svg class="i" style="left:623.70px;top:1029.55px;" width="17.50" height="17.50" viewBox="0 0 512 512" preserveAspectRatio="none"><path fill="#fff" d="M471.6 21.7c-21.9-21.9-57.3-21.9-79.2 0L362.3 51.700l97.9 97.9 30.1-30.1c21.9-21.9 21.9-57.3 0-79.2L471.6 21.7zm-299.2 220c-6.1 6.1-10.8 13.6-13.5 21.9l-29.6 88.8c-2.9 8.6-.6 18.1 5.8 24.6s15.9 8.7 24.6 5.8l88.8-29.6c8.2-2.7 15.7-7.4 21.9-13.5L437.7 172.3 339.7 74.3 172.4 241.7zM96 64C43 64 0 107 0 160V416c0 53 43 96 96 96H352c53 0 96-43 96-96V320c0-17.7-14.3-32-32-32s-32 14.3-32 32v96c0 17.7-14.3 32-32 32H96c-17.7 0-32-14.3-32-32V160c0-17.7 14.3-32 32-32h96c17.7 0 32-14.3 32-32s-14.3-32-32-32H96z"/></svg>
<div class="t" style="left:645.40px;top:1031px;font-size:17.8px;line-height:17.8px;color:#fff;font-weight:400;letter-spacing:-0.060px;">Edit</div>
<div class="r" style="left:602px;top:1068.75px;width:96px;height:36px;background:#d24444;border-radius:5px;"></div>
<svg class="i" style="left:614.00px;top:1077.55px;" width="15.40" height="17.60" viewBox="0 0 448 512" preserveAspectRatio="none"><path fill="#fff" d="M135.2 17.7L128 32H32C14.3 32 0 46.3 0 64S14.3 96 32 96H416c17.7 0 32-14.3 32-32s-14.3-32-32-32H320l-7.2-14.3C307.4 6.8 296.3 0 284.2 0H163.8c-12.1 0-23.2 6.8-28.6 17.7zM416 128H32L53.2 467c1.6 25.3 22.6 45 47.9 45H346.9c25.3 0 46.3-19.7 47.9-45L416 128z"/></svg>
<div class="t" style="left:633.80px;top:1079px;font-size:17.8px;line-height:17.8px;color:#fff;font-weight:400;letter-spacing:0.036px;">Delete</div>
<svg class="i" style="left:830.00px;top:1043.65px;" width="30.00" height="34.00" viewBox="0 0 30 34" preserveAspectRatio="none"><circle cx="14.75" cy="8.55" r="8.55" fill="#003071"/><path d="M0 34V30.5C0 24 5.5 19.6 14.75 19.6S29.5 24 29.5 30.5V34Z" fill="#003071"/></svg>
<div class="t" style="left:941.50px;top:1053px;font-size:20.3px;line-height:20.3px;color:#000;font-weight:400;width:194.90px;text-align:center;letter-spacing:0.200px;">109732</div>
<div class="t" style="left:1136.40px;top:1053px;font-size:20.3px;line-height:20.3px;color:#000;font-weight:400;width:292.10px;text-align:center;letter-spacing:0.200px;">Anthony</div>
<div class="t" style="left:1428.50px;top:1053px;font-size:20.3px;line-height:20.3px;color:#000;font-weight:400;width:292.00px;text-align:center;letter-spacing:0.200px;">J.</div>
<div class="t" style="left:1720.50px;top:1053px;font-size:20.3px;line-height:20.3px;color:#000;font-weight:400;width:291.90px;text-align:center;letter-spacing:0.200px;">Minotti</div>
<div class="t" style="left:2012.40px;top:1053px;font-size:20.3px;line-height:20.3px;color:#000;font-weight:400;width:389.00px;text-align:center;letter-spacing:0.200px;">aminotti@metrohealth.org</div>
<div class="r" style="left:455px;top:1116px;width:1946px;height:1px;background:#d0d9e6;"></div>
<div class="r" style="left:489.3px;top:1155.70px;width:27.5px;height:27.5px;border:2px solid #767676;border-radius:4.5px;box-sizing:border-box;"></div>
<div class="r" style="left:612px;top:1127.80px;width:76px;height:35px;background:#003071;border-radius:5px;"></div>
<svg class="i" style="left:623.70px;top:1135.30px;" width="17.50" height="17.50" viewBox="0 0 512 512" preserveAspectRatio="none"><path fill="#fff" d="M471.6 21.7c-21.9-21.9-57.3-21.9-79.2 0L362.3 51.700l97.9 97.9 30.1-30.1c21.9-21.9 21.9-57.3 0-79.2L471.6 21.7zm-299.2 220c-6.1 6.1-10.8 13.6-13.5 21.9l-29.6 88.8c-2.9 8.6-.6 18.1 5.8 24.6s15.9 8.7 24.6 5.8l88.8-29.6c8.2-2.7 15.7-7.4 21.9-13.5L437.7 172.3 339.7 74.3 172.4 241.7zM96 64C43 64 0 107 0 160V416c0 53 43 96 96 96H352c53 0 96-43 96-96V320c0-17.7-14.3-32-32-32s-32 14.3-32 32v96c0 17.7-14.3 32-32 32H96c-17.7 0-32-14.3-32-32V160c0-17.7 14.3-32 32-32h96c17.7 0 32-14.3 32-32s-14.3-32-32-32H96z"/></svg>
<div class="t" style="left:645.40px;top:1137px;font-size:17.8px;line-height:17.8px;color:#fff;font-weight:400;letter-spacing:-0.060px;">Edit</div>
<div class="r" style="left:602px;top:1174.50px;width:96px;height:36px;background:#d24444;border-radius:5px;"></div>
<svg class="i" style="left:614.00px;top:1183.30px;" width="15.40" height="17.60" viewBox="0 0 448 512" preserveAspectRatio="none"><path fill="#fff" d="M135.2 17.7L128 32H32C14.3 32 0 46.3 0 64S14.3 96 32 96H416c17.7 0 32-14.3 32-32s-14.3-32-32-32H320l-7.2-14.3C307.4 6.8 296.3 0 284.2 0H163.8c-12.1 0-23.2 6.8-28.6 17.7zM416 128H32L53.2 467c1.6 25.3 22.6 45 47.9 45H346.9c25.3 0 46.3-19.7 47.9-45L416 128z"/></svg>
<div class="t" style="left:633.80px;top:1184px;font-size:17.8px;line-height:17.8px;color:#fff;font-weight:400;letter-spacing:0.036px;">Delete</div>
<svg class="i" style="left:830.00px;top:1149.40px;" width="30.00" height="34.00" viewBox="0 0 30 34" preserveAspectRatio="none"><circle cx="14.75" cy="8.55" r="8.55" fill="#003071"/><path d="M0 34V30.5C0 24 5.5 19.6 14.75 19.6S29.5 24 29.5 30.5V34Z" fill="#003071"/></svg>
<div class="t" style="left:941.50px;top:1158px;font-size:20.3px;line-height:20.3px;color:#000;font-weight:400;width:194.90px;text-align:center;letter-spacing:0.200px;">109750</div>
<div class="t" style="left:1136.40px;top:1158px;font-size:20.3px;line-height:20.3px;color:#000;font-weight:400;width:292.10px;text-align:center;letter-spacing:0.200px;">Amitabh</div>
<div class="t" style="left:1428.50px;top:1158px;font-size:20.3px;line-height:20.3px;color:#000;font-weight:400;width:292.00px;text-align:center;letter-spacing:0.200px;"></div>
<div class="t" style="left:1720.50px;top:1158px;font-size:20.3px;line-height:20.3px;color:#000;font-weight:400;width:291.90px;text-align:center;letter-spacing:0.200px;">Goel</div>
<div class="t" style="left:2012.40px;top:1158px;font-size:20.3px;line-height:20.3px;color:#000;font-weight:400;width:389.00px;text-align:center;letter-spacing:0.200px;">Amitabh.Goel@UHhospitals.org</div>
<div class="r" style="left:455px;top:1221px;width:1946px;height:1px;background:#d0d9e6;"></div>
<div class="r" style="left:489.3px;top:1261.45px;width:27.5px;height:27.5px;border:2px solid #767676;border-radius:4.5px;box-sizing:border-box;"></div>
<div class="r" style="left:612px;top:1233.55px;width:76px;height:35px;background:#003071;border-radius:5px;"></div>
<svg class="i" style="left:623.70px;top:1241.05px;" width="17.50" height="17.50" viewBox="0 0 512 512" preserveAspectRatio="none"><path fill="#fff" d="M471.6 21.7c-21.9-21.9-57.3-21.9-79.2 0L362.3 51.700l97.9 97.9 30.1-30.1c21.9-21.9 21.9-57.3 0-79.2L471.6 21.7zm-299.2 220c-6.1 6.1-10.8 13.6-13.5 21.9l-29.6 88.8c-2.9 8.6-.6 18.1 5.8 24.6s15.9 8.7 24.6 5.8l88.8-29.6c8.2-2.7 15.7-7.4 21.9-13.5L437.7 172.3 339.7 74.3 172.4 241.7zM96 64C43 64 0 107 0 160V416c0 53 43 96 96 96H352c53 0 96-43 96-96V320c0-17.7-14.3-32-32-32s-32 14.3-32 32v96c0 17.7-14.3 32-32 32H96c-17.7 0-32-14.3-32-32V160c0-17.7 14.3-32 32-32h96c17.7 0 32-14.3 32-32s-14.3-32-32-32H96z"/></svg>
<div class="t" style="left:645.40px;top:1243px;font-size:17.8px;line-height:17.8px;color:#fff;font-weight:400;letter-spacing:-0.060px;">Edit</div>
<div class="r" style="left:602px;top:1280.25px;width:96px;height:36px;background:#d24444;border-radius:5px;"></div>
<svg class="i" style="left:614.00px;top:1289.05px;" width="15.40" height="17.60" viewBox="0 0 448 512" preserveAspectRatio="none"><path fill="#fff" d="M135.2 17.7L128 32H32C14.3 32 0 46.3 0 64S14.3 96 32 96H416c17.7 0 32-14.3 32-32s-14.3-32-32-32H320l-7.2-14.3C307.4 6.8 296.3 0 284.2 0H163.8c-12.1 0-23.2 6.8-28.6 17.7zM416 128H32L53.2 467c1.6 25.3 22.6 45 47.9 45H346.9c25.3 0 46.3-19.7 47.9-45L416 128z"/></svg>
<div class="t" style="left:633.80px;top:1290px;font-size:17.8px;line-height:17.8px;color:#fff;font-weight:400;letter-spacing:0.036px;">Delete</div>
<svg class="i" style="left:830.00px;top:1255.15px;" width="30.00" height="34.00" viewBox="0 0 30 34" preserveAspectRatio="none"><circle cx="14.75" cy="8.55" r="8.55" fill="#003071"/><path d="M0 34V30.5C0 24 5.5 19.6 14.75 19.6S29.5 24 29.5 30.5V34Z" fill="#003071"/></svg>
<div class="t" style="left:941.50px;top:1264px;font-size:20.3px;line-height:20.3px;color:#000;font-weight:400;width:194.90px;text-align:center;letter-spacing:0.200px;">109751</div>
<div class="t" style="left:1136.40px;top:1264px;font-size:20.3px;line-height:20.3px;color:#000;font-weight:400;width:292.10px;text-align:center;letter-spacing:0.200px;">Annette</div>
<div class="t" style="left:1428.50px;top:1264px;font-size:20.3px;line-height:20.3px;color:#000;font-weight:400;width:292.00px;text-align:center;letter-spacing:0.200px;"></div>
<div class="t" style="left:1720.50px;top:1264px;font-size:20.3px;line-height:20.3px;color:#000;font-weight:400;width:291.90px;text-align:center;letter-spacing:0.200px;">Kyprianou</div>
<div class="t" style="left:2012.40px;top:1264px;font-size:20.3px;line-height:20.3px;color:#000;font-weight:400;width:389.00px;text-align:center;letter-spacing:0.200px;">akyprianou@metrohealth.org</div>
<div class="r" style="left:455px;top:1327px;width:1946px;height:1px;background:#d0d9e6;"></div>
<div class="r" style="left:612px;top:1339.30px;width:76px;height:35px;background:#003071;border-radius:5px;"></div>
<svg class="i" style="left:623.70px;top:1346.80px;" width="17.50" height="17.50" viewBox="0 0 512 512" preserveAspectRatio="none"><path fill="#fff" d="M471.6 21.7c-21.9-21.9-57.3-21.9-79.2 0L362.3 51.700l97.9 97.9 30.1-30.1c21.9-21.9 21.9-57.3 0-79.2L471.6 21.7zm-299.2 220c-6.1 6.1-10.8 13.6-13.5 21.9l-29.6 88.8c-2.9 8.6-.6 18.1 5.8 24.6s15.9 8.7 24.6 5.8l88.8-29.6c8.2-2.7 15.7-7.4 21.9-13.5L437.7 172.3 339.7 74.3 172.4 241.7zM96 64C43 64 0 107 0 160V416c0 53 43 96 96 96H352c53 0 96-43 96-96V320c0-17.7-14.3-32-32-32s-32 14.3-32 32v96c0 17.7-14.3 32-32 32H96c-17.7 0-32-14.3-32-32V160c0-17.7 14.3-32 32-32h96c17.7 0 32-14.3 32-32s-14.3-32-32-32H96z"/></svg>
<div class="t" style="left:645.40px;top:1349px;font-size:17.8px;line-height:17.8px;color:#fff;font-weight:400;letter-spacing:-0.060px;">Edit</div>
<div class="r" style="left:602px;top:1386.00px;width:96px;height:36px;background:#d24444;border-radius:5px;"></div>
<svg class="i" style="left:614.00px;top:1394.80px;" width="15.40" height="17.60" viewBox="0 0 448 512" preserveAspectRatio="none"><path fill="#fff" d="M135.2 17.7L128 32H32C14.3 32 0 46.3 0 64S14.3 96 32 96H416c17.7 0 32-14.3 32-32s-14.3-32-32-32H320l-7.2-14.3C307.4 6.8 296.3 0 284.2 0H163.8c-12.1 0-23.2 6.8-28.6 17.7zM416 128H32L53.2 467c1.6 25.3 22.6 45 47.9 45H346.9c25.3 0 46.3-19.7 47.9-45L416 128z"/></svg>
<div class="t" style="left:633.80px;top:1396px;font-size:17.8px;line-height:17.8px;color:#fff;font-weight:400;letter-spacing:0.036px;">Delete</div>
<svg class="i" style="left:830.00px;top:1360.90px;" width="30.00" height="34.00" viewBox="0 0 30 34" preserveAspectRatio="none"><circle cx="14.75" cy="8.55" r="8.55" fill="#003071"/><path d="M0 34V30.5C0 24 5.5 19.6 14.75 19.6S29.5 24 29.5 30.5V34Z" fill="#003071"/></svg>
<div class="r" style="left:0px;top:1364px;width:2442px;height:70px;background:#e6eaf2;z-index:10;"></div>
<div class="r" style="left:0px;top:1433px;width:2442px;height:1px;background:#8e8e8e;z-index:10;"></div>
<div style="position:absolute;left:0;top:0;z-index:11;">
<div class="t" style="left:942.00px;top:1384px;font-size:29.5px;line-height:29.5px;color:#4a7fab;font-weight:700;letter-spacing:-1.300px;font-style:italic;">Academi<span style="color:#f7b733;font-size:34px;margin-left:-0.5px;letter-spacing:0">X</span></div>
<div class="t" style="left:1098.80px;top:1388px;font-size:20.6px;line-height:20.6px;color:#0f2d66;font-weight:400;letter-spacing:0.284px;">© 2025 Mtec AcademiX. All rights reserved.</div>
</div>
</body></html>
